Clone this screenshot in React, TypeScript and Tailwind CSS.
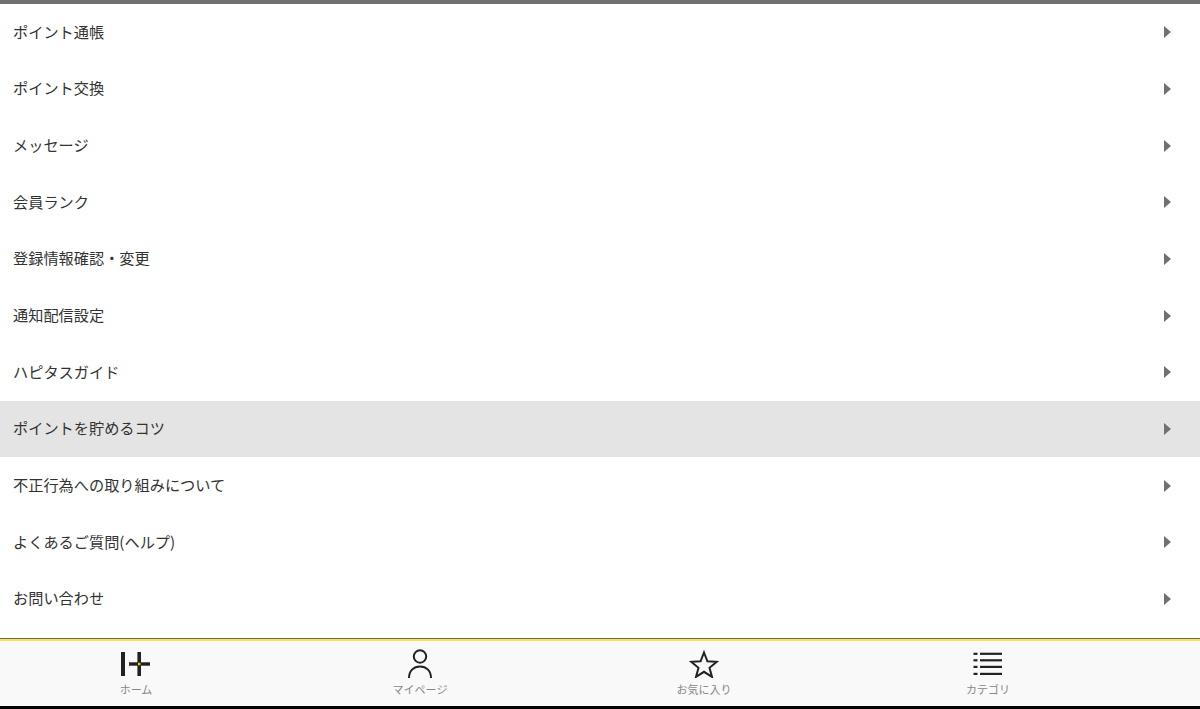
const menuItems = [
  "ポイント通帳",
  "ポイント交換",
  "メッセージ",
  "会員ランク",
  "登録情報確認・変更",
  "通知配信設定",
  "ハピタスガイド",
  "ポイントを貯めるコツ",
  "不正行為への取り組みについて",
  "よくあるご質問(ヘルプ)",
  "お問い合わせ",
]

function HomeIcon() {
  return (
    <svg width="30" height="24" viewBox="0 0 30 24">
      <rect x="0" y="0" width="4" height="24" fill="#222" />
      <rect x="8" y="10.3" width="21" height="3.4" fill="#222" />
      <rect x="16.4" y="0" width="3.6" height="24" fill="#222" />
      <rect x="17" y="10.8" width="2.4" height="2.4" fill="#f2d600" />
    </svg>
  )
}

function UserIcon() {
  return (
    <svg width="26" height="30" viewBox="0 0 26 30" fill="none" stroke="#222" strokeWidth="2">
      <circle cx="13" cy="7.5" r="6.2" />
      <path d="M2 29c0-7 4.5-11.5 11-11.5S24 22 24 29" />
    </svg>
  )
}

function StarIcon() {
  return (
    <svg width="30" height="28" viewBox="0 0 30 28" fill="none" stroke="#222" strokeWidth="2" strokeLinejoin="miter">
      <path d="M15 2.5l3.4 8.8 9.4.5-7.3 6 2.5 9.1-8-5.1-8 5.1 2.5-9.1-7.3-6 9.4-.5z" />
    </svg>
  )
}

function ListIcon() {
  return (
    <svg width="30" height="24" viewBox="0 0 30 24" fill="#222">
      <rect x="0.5" y="0.7" width="4" height="2.2" />
      <rect x="7" y="0.7" width="22" height="2.2" />
      <rect x="0.5" y="7.2" width="4" height="2.2" />
      <rect x="7" y="7.2" width="22" height="2.2" />
      <rect x="0.5" y="13.8" width="4" height="2.2" />
      <rect x="7" y="13.8" width="22" height="2.2" />
      <rect x="0.5" y="20.8" width="4" height="2.2" />
      <rect x="7" y="20.8" width="22" height="2.2" />
    </svg>
  )
}

const navItems = [
  { label: "ホーム", icon: <HomeIcon /> },
  { label: "マイページ", icon: <UserIcon /> },
  { label: "お気に入り", icon: <StarIcon /> },
  { label: "カテゴリ", icon: <ListIcon /> },
]

export default function App() {
  return (
    <div className="flex h-[709px] w-[1200px] flex-col overflow-hidden bg-white font-['Noto_Sans_CJK_JP','Noto_Sans',sans-serif]">
      <div className="h-[4px] shrink-0 bg-[#707070]" />

      <ul className="flex-1">
        {menuItems.map((item, i) => (
          <li
            key={item}
            className={
              i === 7
                ? "flex h-[56.67px] items-center justify-between bg-[#e4e4e4] pl-[13px] pr-[29px]"
                : "flex h-[56.67px] items-center justify-between pl-[13px] pr-[29px]"
            }
          >
            <span className="pb-[2px] text-[15.2px] leading-none text-[#333]">{item}</span>
            <span className="h-0 w-0 border-y-[6px] border-l-[7px] border-y-transparent border-l-[#707070]" />
          </li>
        ))}
      </ul>

      <div className="h-px shrink-0 bg-[#6b6b5a]" />
      <div className="h-[2px] shrink-0 bg-[#f6e45c]" />
      <nav className="flex h-[65px] shrink-0 bg-[#f9f9f9]">
        {navItems.map((nav) => (
          <div key={nav.label} className="flex w-[284px] first:ml-[-6px] flex-col items-center pt-[7px]">
            <div className="flex h-[32px] items-center justify-center">{nav.icon}</div>
            <span className="mt-[4px] text-[11px] leading-none text-[#888]">{nav.label}</span>
          </div>
        ))}
      </nav>
      <div className="h-[3px] shrink-0 bg-black" />
    </div>
  )
}
